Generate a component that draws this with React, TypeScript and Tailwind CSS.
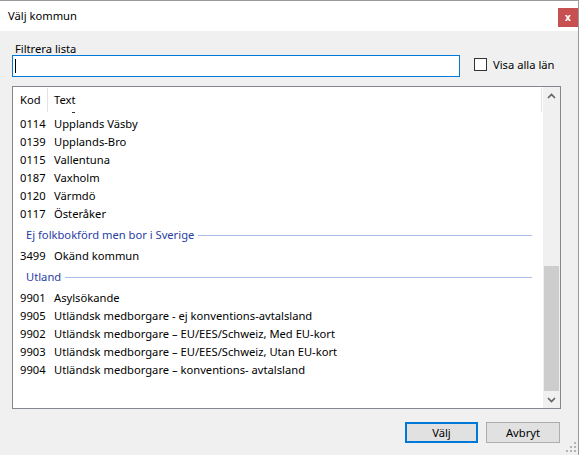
import React from 'react';

type Row = { code: string; text: string };
type Group = { title: string | null; rows: Row[] };

const groups: Group[] = [
  {
    title: null,
    rows: [
      { code: '0114', text: 'Upplands Väsby' },
      { code: '0139', text: 'Upplands-Bro' },
      { code: '0115', text: 'Vallentuna' },
      { code: '0187', text: 'Vaxholm' },
      { code: '0120', text: 'Värmdö' },
      { code: '0117', text: 'Österåker' },
    ],
  },
  {
    title: 'Ej folkbokförd men bor i Sverige',
    rows: [{ code: '3499', text: 'Okänd kommun' }],
  },
  {
    title: 'Utland',
    rows: [
      { code: '9901', text: 'Asylsökande' },
      { code: '9905', text: 'Utländsk medborgare - ej konventions-avtalsland' },
      { code: '9902', text: 'Utländsk medborgare – EU/EES/Schweiz, Med EU-kort' },
      { code: '9903', text: 'Utländsk medborgare – EU/EES/Schweiz, Utan EU-kort' },
      { code: '9904', text: 'Utländsk medborgare – konventions- avtalsland' },
    ],
  },
];

function Chevron({ up }: { up?: boolean }) {
  return (
    <svg width="9" height="6" viewBox="0 0 9 6" className="block">
      <path
        d={up ? 'M1 5 L4.5 1.5 L8 5' : 'M1 1 L4.5 4.5 L8 1'}
        fill="none"
        stroke="#606060"
        strokeWidth="1.6"
      />
    </svg>
  );
}

function Grip() {
  const dots = [
    [10, 1],
    [6, 5],
    [10, 5],
    [2, 9],
    [6, 9],
    [10, 9],
  ];
  return (
    <svg width="13" height="12" viewBox="0 0 13 12">
      {dots.map(([x, y], i) => (
        <rect key={i} x={x} y={y} width="2" height="2" fill="#b4b4b4" />
      ))}
    </svg>
  );
}

export default function App() {
  return (
    <div className="w-[579px] h-[455px] bg-[#f0f0f0] border-t border-r border-[#9a9a9a] flex flex-col font-['Noto_Sans',sans-serif] text-[11.2px] text-black overflow-hidden">
      {/* Title bar */}
      <div className="h-[30px] bg-white flex justify-between shrink-0">
        <div className="pl-[8px] pt-[6px] leading-[18px]">Välj kommun</div>
        <div className="mt-[7px] w-[20px] h-[19px] bg-[#c75050] flex items-center justify-center text-white text-[10px] font-bold leading-none pb-[2px]">
          x
        </div>
      </div>

      <div className="flex-1 relative px-[12px]">
        <div className="pl-[3px] pt-[11px] leading-[13px]">Filtrera lista</div>

        <div className="flex items-start">
          <div className="w-[448px] h-[22px] bg-white border border-[#0078d7] flex items-center pl-[2px]">
            <div className="w-px h-[14px] bg-black" />
          </div>
          <div className="ml-[14px] mt-[3px] w-[13px] h-[13px] bg-white border border-[#333333]" />
          <div className="ml-[6px] mt-[1px] leading-[18px]">Visa alla län</div>
        </div>

        {/* List box */}
        <div className="mt-[9px] w-[549px] h-[323px] bg-white border border-[#828790] flex">
          <div className="flex-1 flex flex-col min-w-0">
            <div className="h-[25px] flex shrink-0 pt-[1px]">
              <div className="w-[34px] pl-[7px] leading-[23px]">Kod</div>
              <div className="w-px h-[24px] bg-[#e3e3e3]" />
              <div className="flex-1 pl-[6px] leading-[23px]">Text</div>
              <div className="w-px h-[24px] bg-[#e3e3e3] mr-[1px]" />
            </div>
            <div className="flex-1 overflow-hidden">
              {/* tail of the row scrolled out above */}
              <div className="h-[3px] pl-[59px]">
                <div className="w-[3px] h-[1px] bg-[#333333]" />
              </div>
              {groups.map((g, gi) => (
                <div key={gi}>
                  {g.title && (
                    <div className="h-[24px] flex items-center pl-[13px] pr-[11px] text-[#2840a3]">
                      <span className="leading-[18px]">{g.title}</span>
                      <div className="flex-1 ml-[4px] h-px bg-[#a9bde6]" />
                    </div>
                  )}
                  {g.rows.map((r) => (
                    <div key={r.code} className="h-[18px] flex items-center leading-[18px]">
                      <div className="w-[41px] pl-[7px] shrink-0">{r.code}</div>
                      <div className="whitespace-nowrap">{r.text}</div>
                    </div>
                  ))}
                </div>
              ))}
            </div>
          </div>

          {/* Scrollbar */}
          <div className="w-[17px] bg-[#f0f0f0] flex flex-col shrink-0">
            <div className="h-[17px] flex items-center justify-center">
              <Chevron up />
            </div>
            <div className="flex-1" />
            <div className="h-[125px] mx-px bg-[#cdcdcd]" />
            <div className="h-[17px] flex items-center justify-center">
              <Chevron />
            </div>
          </div>
        </div>

        {/* Buttons */}
        <div className="mt-[13px] w-[549px] flex justify-end gap-[8px] pr-[1px]">
          <div className="w-[73px] h-[21px] bg-[#e1e1e1] border-2 border-[#0078d7] flex items-center justify-center leading-none">
            Välj
          </div>
          <div className="w-[74px] h-[21px] bg-[#e1e1e1] border border-[#adadad] flex items-center justify-center leading-none">
            Avbryt
          </div>
        </div>

        <div className="absolute right-[1px] bottom-[2px]">
          <Grip />
        </div>
      </div>
    </div>
  );
}
